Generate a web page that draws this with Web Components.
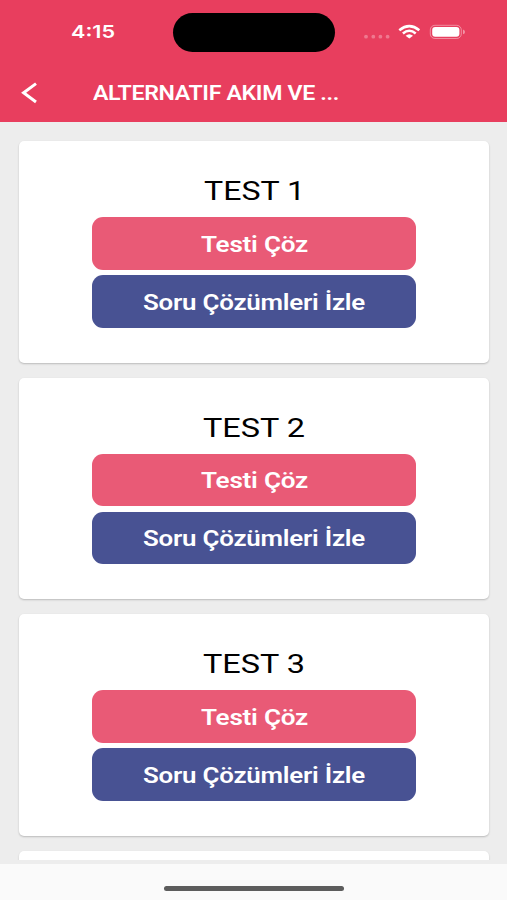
<!DOCTYPE html>
<html lang="tr">
<head>
<meta charset="utf-8">
<title>Testler</title>
<style>
html,body{margin:0;height:100%;overflow:hidden}
body{font-family:Roboto,"Liberation Sans",sans-serif;background:#ededed}
</style>
</head>
<body>
<phone-screen>
  <status-bar slot="top" time="4:15"></status-bar>
  <nav-bar slot="top">ALTERNATIF AKIM VE ...</nav-bar>
  <test-card heading="TEST 1" w="101"></test-card>
  <test-card heading="TEST 2" w="102"></test-card>
  <test-card heading="TEST 3" w="102"></test-card>
  <card-edge></card-edge>
</phone-screen>
<script>
function define(name, html, setup) {
  customElements.define(name, class extends HTMLElement {
    connectedCallback() {
      if (this.shadowRoot) return;
      const t = document.createElement('template');
      t.innerHTML = html;
      this.attachShadow({mode: 'open'}).append(t.content.cloneNode(true));
      if (setup) setup(this, this.shadowRoot);
    }
  });
}

// Single line of text widened to the advance width given in "w".
define('wide-text', `<style>
  :host{display:block;white-space:nowrap;flex:none}
  span{display:inline-block;transform-origin:0 50%}
</style><span><slot></slot></span>`, (el, root) => {
  const w = +el.getAttribute('w'), s = root.querySelector('span');
  el.style.width = w + 'px';
  s.style.transform = 'scaleX(' + w / s.getBoundingClientRect().width + ')';
});

define('phone-screen', `<style>
  :host{display:flex;flex-direction:column;width:507px;height:900px;overflow:hidden;background:#ededed}
  header{background:#e83e5e;height:122px;flex:none;display:flex;flex-direction:column}
  main{flex:0 0 738px;padding:19px 18px 0 19px;box-sizing:border-box;overflow:hidden;display:flex;flex-direction:column;gap:15px}
  footer{height:36px;margin-top:auto;background:#fafafa;flex:none;display:flex;justify-content:center;align-items:flex-start}
  i{width:180px;height:5px;border-radius:3px;background:#5c5c5c;margin:22px 0 0 1px}
</style><header><slot name="top"></slot></header><main><slot></slot></main><footer><i></i></footer>`);

define('status-bar', `<style>
  :host{display:grid;grid-template-columns:173px 162px 1fr;height:64px;color:#fff;align-items:center}
  .time{padding-left:71px;font:600 17.5px/20px Inter,sans-serif}
  .island{height:39px;border-radius:20px;background:#000}
  .icons{display:flex;align-items:center}
  svg{display:block}
</style>
<div class="time"><wide-text w="44">4:15</wide-text></div>
<div class="island"></div>
<div class="icons"><svg width="172" height="64" viewBox="335 0 172 64" fill="none">
  <g fill="#fff" opacity=".3"><circle cx="366" cy="36.7" r="1.9"/><circle cx="373.3" cy="36.7" r="1.9"/><circle cx="380.4" cy="36.7" r="1.9"/><circle cx="387.6" cy="36.7" r="1.9"/></g>
  <g stroke="#fff" stroke-width="2.6"><path d="M399.3 30.2Q409.3 22.2 419.3 30.2"/><path d="M402.9 33.4Q409.3 28.1 415.7 33.4"/></g>
  <path fill="#fff" d="M405.6 35.7Q409.3 32.6 413 35.7L409.3 38.6Z"/>
  <rect x="430.3" y="25.3" width="31" height="13.2" rx="4.6" stroke="#fff" stroke-opacity=".4"/>
  <rect x="432.2" y="27" width="27.2" height="9.8" rx="3" fill="#fff"/>
  <path d="M463 29.5Q465 30.2 465 31.9Q465 33.5 463 34.3Z" fill="#fff" fill-opacity=".45"/>
</svg></div>`);

define('nav-bar', `<style>
  :host{display:flex;align-items:center;height:58px;color:#fff;font:600 19.8px/24px Roboto,sans-serif;letter-spacing:-.3px}
  svg{margin-left:20px;margin-right:53px;flex:none}
  wide-text{margin-top:2px}
</style><svg width="20" height="24" viewBox="20 81 20 24" fill="none" stroke="#fff" stroke-width="3"><path d="M36 83.6L23.6 92.8L36 102"/></svg>
<wide-text w="246"><slot></slot></wide-text>`);

define('card-edge', `<style>
  :host{display:block;height:60px;flex:none;background:#fff;border-radius:5px;box-shadow:0 1px 2px rgba(0,0,0,.18)}
</style>`);

define('test-card', `<style>
  :host{display:flex;flex-direction:column;align-items:center;height:221.5px;flex:none;box-sizing:border-box;padding-top:34px;background:#fff;border-radius:5px;box-shadow:0 1px 2px rgba(0,0,0,.22)}
  h2{margin:0 0 10.3px;font:400 26.2px/32px Roboto,sans-serif;color:#000}
  action-button+action-button{margin-top:5.5px}
</style><h2><wide-text></wide-text></h2>
<action-button w="107" style="--fill:#e95a76">Testi Çöz</action-button>
<action-button w="222" style="--fill:#485293">Soru Çözümleri İzle</action-button>`, (el, root) => {
  const old = root.querySelector('wide-text'), t = document.createElement('wide-text');
  t.setAttribute('w', el.getAttribute('w'));
  t.textContent = el.getAttribute('heading');
  old.replaceWith(t);
});

define('action-button', `<style>
  :host{display:block;width:324.5px;height:52.5px;flex:none}
  button{all:unset;box-sizing:border-box;width:100%;height:100%;display:flex;align-items:center;justify-content:center;padding-top:2px;border-radius:11px;background:var(--fill);color:#fff;font:600 22px/26px Roboto,sans-serif;letter-spacing:-.2px}
</style><button><wide-text><slot></slot></wide-text></button>`, (el, root) => {
  const old = root.querySelector('wide-text'), t = document.createElement('wide-text');
  t.setAttribute('w', el.getAttribute('w'));
  t.append(document.createElement('slot'));
  old.replaceWith(t);
});
</script>
</body>
</html>
